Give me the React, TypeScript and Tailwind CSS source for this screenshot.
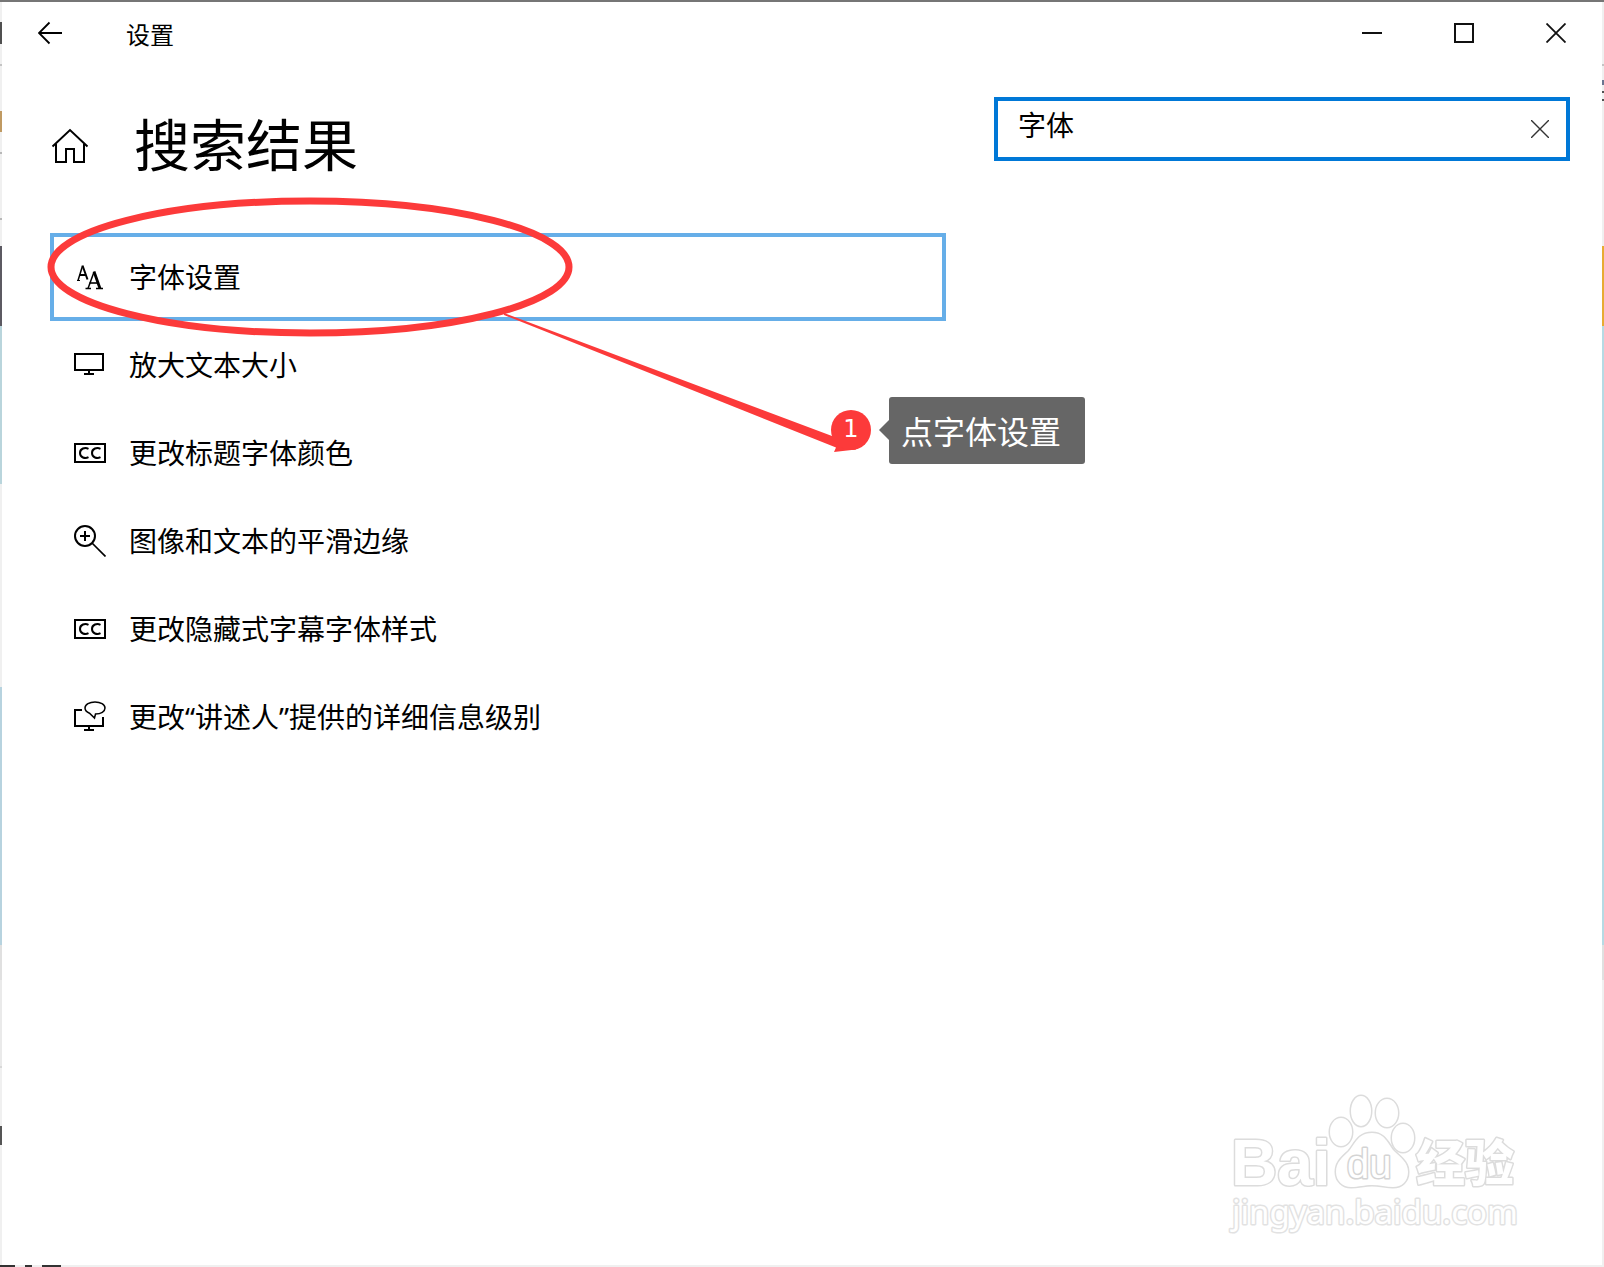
import { useState, type ReactNode } from 'react';

const FONT = "font-['Noto_Sans','Noto_Sans_CJK_SC',sans-serif]";

function FontIcon() {
  return (
    <svg className="size-8 shrink-0" viewBox="0 0 32 32" fill="none" stroke="#000" aria-hidden="true">
      <path d="M4 19.500 8.500 5" strokeWidth="1.500" />
      <path d="M8.500 4.500 13.500 18.500M5.500 14H12" strokeWidth="2" />
      <path d="M3 19.500h3" strokeWidth="1" />
      <path d="M14 27.500 20 11" strokeWidth="1.500" />
      <path d="M20 10.500 26 27.500" strokeWidth="2.800" />
      <path d="M15.500 22H24" strokeWidth="1.600" />
      <path d="M11.500 27.500h5.500M22 27.500h7" strokeWidth="1.400" />
    </svg>
  );
}

function MonitorIcon() {
  return (
    <svg className="size-8 shrink-0" viewBox="0 0 32 32" fill="none" stroke="#000" strokeWidth="2" aria-hidden="true">
      <path d="M1 5H29V21H1ZM15 21V25M10 25H20" />
    </svg>
  );
}

function CaptionIcon() {
  return (
    <svg className="size-8 shrink-0" viewBox="0 0 32 32" fill="none" stroke="#000" strokeWidth="2" aria-hidden="true">
      <path d="M1 7H31V25H1Z" />
      <path d="M14.500 11.800C11 10 6 11.500 6 16s5 6 8.500 4.200M26.500 11.800C23 10 18 11.500 18 16s5 6 8.500 4.200" />
    </svg>
  );
}

function ZoomIcon() {
  return (
    <svg className="size-8 shrink-0" viewBox="0 0 32 32" fill="none" stroke="#000" strokeWidth="2" aria-hidden="true">
      <circle cx="11" cy="11" r="10" />
      <path d="M6 11H16M11 6V16" />
      <path d="M18 18 31.500 31.500" strokeWidth="1.700" />
    </svg>
  );
}

function NarratorIcon() {
  return (
    <svg className="size-8 shrink-0" viewBox="0 0 32 32" fill="none" stroke="#000" strokeWidth="2" aria-hidden="true">
      <path d="M8 9H1V25H29V16M15 25V29M10 29H20" />
      <path
        d="M15.500 12.200C12.500 11 11 9 11 7c0-3.500 4.500-6 10-6s10 2.500 10 6-4 6-9.500 6l-1 4Z"
        strokeWidth="1.500"
      />
    </svg>
  );
}

const results: { label: string; icon: ReactNode }[] = [
  { label: '字体设置', icon: <FontIcon /> },
  { label: '放大文本大小', icon: <MonitorIcon /> },
  { label: '更改标题字体颜色', icon: <CaptionIcon /> },
  { label: '图像和文本的平滑边缘', icon: <ZoomIcon /> },
  { label: '更改隐藏式字幕字体样式', icon: <CaptionIcon /> },
  { label: '更改“讲述人”提供的详细信息级别', icon: <NarratorIcon /> },
];

// slivers of the desktop that show beside the window
const leftEdge = [
  'h-[20px] bg-[#f0f0f0]',
  'h-[22px] bg-[#505050]',
  'h-[20px] bg-[#f0f0f0]',
  'h-[2px] bg-[#c4c4c4]',
  'h-[45px] bg-[#f0f0f0]',
  'h-[21px] bg-[#c09a62]',
  'h-[20px] bg-[#f0f0f0]',
  'h-[2px] bg-[#b8b8b8]',
  'h-[64px] bg-[#f0f0f0]',
  'h-[2px] bg-[#b8b8b8]',
  'h-[26px] bg-[#f0f0f0]',
  'h-[80px] bg-[#5c5a62]',
  'h-[158px] bg-[#b9d5dc]',
  'h-[203px] bg-[#f0f0f0]',
  'h-[258px] bg-[#b7d3df]',
  'h-[35px] bg-[#e0e0e0]',
  'h-[86px] bg-[#eaeaea]',
  'h-[2px] bg-[#d8d8d8]',
  'h-[58px] bg-[#f0f0f0]',
  'h-[19px] bg-[#555555]',
  'flex-1 bg-[#f0f0f0]',
];

const rightEdge = [
  'h-[62px] bg-[#f0f0f0]',
  'h-[2px] bg-[#c4c4c4]',
  'h-[14px] bg-[#f0f0f0]',
  'h-[5px] bg-[#6a7590]',
  'h-[6px] bg-[#f0f0f0]',
  'h-[2px] bg-[#505050]',
  'h-[6px] bg-[#f0f0f0]',
  'h-[2px] bg-[#505050]',
  'h-[145px] bg-[#f0f0f0]',
  'h-[80px] bg-[#e8ab32]',
  'h-[619px] bg-[#b6dae4]',
  'h-[35px] bg-[#e0e0e0]',
  'flex-1 bg-[#f0f0f0]',
];

function Edge({ parts }: { parts: string[] }) {
  return (
    <div className="flex w-[2px] shrink-0 flex-col" aria-hidden="true">
      {parts.map((part, i) => (
        <div key={i} className={part} />
      ))}
    </div>
  );
}

function TitleBar() {
  return (
    <header className="flex h-[62px] items-center">
      <button type="button" aria-label="返回" className="flex h-full w-24 items-center justify-center">
        <svg className="size-6" viewBox="0 0 24 24" fill="none" stroke="#000" strokeWidth="1.800">
          <path d="M1 12H24M11.500 1.500 1 12 11.500 22.500" />
        </svg>
      </button>
      <span className="ml-7 pt-1 text-[24px] leading-8">设置</span>
      <div className="ml-auto flex h-full">
        <button type="button" aria-label="最小化" className="flex w-[92px] items-center justify-center">
          <svg className="size-5" viewBox="0 0 20 20" stroke="#111" strokeWidth="2">
            <path d="M0 10H20" />
          </svg>
        </button>
        <button type="button" aria-label="最大化" className="flex w-[92px] items-center justify-center">
          <svg className="size-5" viewBox="0 0 20 20" fill="none" stroke="#111" strokeWidth="2">
            <path d="M1 1H19V19H1Z" />
          </svg>
        </button>
        <button type="button" aria-label="关闭" className="flex w-[92px] items-center justify-center">
          <svg className="size-5" viewBox="0 0 20 20" stroke="#111" strokeWidth="1.800">
            <path d="M.5.500 19.500 19.500M19.500.500.5 19.500" />
          </svg>
        </button>
      </div>
    </header>
  );
}

// hand-drawn callout over the first result
function Callout() {
  return (
    <div className="pointer-events-none absolute top-0 left-0">
      <svg className="h-[480px] w-[900px]" viewBox="2 2 900 480" fill="none">
        <ellipse cx="310" cy="267" rx="259" ry="66" stroke="#fc3a3a" strokeWidth="7" />
        <path d="M504 313 832 436 851 430 856 449.500 834 452 836 447.500 504 315Z" fill="#fc3a3a" />
        <circle cx="851" cy="430" r="20" fill="#fc3a3a" />
        <path d="M879 430 890 419V441Z" fill="#666" />
        <text x="851" y="437" textAnchor="middle" fill="#fff" className="font-['DejaVu_Sans',sans-serif] text-[24px]">
          1
        </text>
      </svg>
      <div className="absolute top-[395px] left-[887px] rounded-[3px] bg-[#666] pt-[11px] pr-6 pb-2 pl-3 text-[32px] leading-[48px] whitespace-nowrap text-white">
        点字体设置
      </div>
    </div>
  );
}

function Watermark() {
  return (
    <svg
      className="pointer-events-none absolute right-[62px] bottom-[25px] h-[150px] w-[320px]"
      viewBox="1220 1090 320 150"
      fill="#fff"
      stroke="#dcdcdc"
      strokeWidth="3"
      strokeLinejoin="round"
      aria-hidden="true"
    >
      <g paintOrder="stroke">
        <text x="1231" y="1185" className="font-['Liberation_Sans',sans-serif] text-[64px] font-bold">
          Bai
        </text>
        <ellipse cx="1341" cy="1132" rx="11" ry="14" />
        <ellipse cx="1361" cy="1111" rx="10" ry="15" />
        <ellipse cx="1387" cy="1113" rx="11" ry="14" />
        <ellipse cx="1403" cy="1138" rx="11" ry="14" />
        <path d="M1372 1133c-14 0-17 11-23 18-7 7-13 11-13 21 0 9 7 15 15 15 8 0 13-2 21-2s14 2 21 2c9 0 15-6 15-15 0-10-7-14-14-21-6-7-9-18-22-18Z" />
        <text
          x="1347"
          y="1178"
          stroke="#d4d4d4"
          className="font-['Liberation_Sans',sans-serif] text-[40px]"
        >
          du
        </text>
        <text x="1416" y="1181" className="font-['Noto_Sans_CJK_SC',sans-serif] text-[49px] font-black">
          经验
        </text>
        <text x="1232" y="1224" stroke="#e2e2e2" className="font-['Noto_Sans',sans-serif] text-[33px]">
          jingyan.baidu.com
        </text>
      </g>
    </svg>
  );
}

export default function App() {
  const [query, setQuery] = useState('字体');

  return (
    <div lang="zh-CN" className={`flex min-h-screen flex-col bg-white text-black ${FONT}`}>
      <div className="h-[2px] bg-[#767676]" />
      <div className="flex flex-1">
        <Edge parts={leftEdge} />

        <main className="relative min-w-0 flex-1">
          <TitleBar />

          <div className="mt-[33px] mr-8 ml-12 flex h-24 items-start">
            <a href="#home" aria-label="主页" className="mt-[30px]">
              <svg className="h-9 w-10" viewBox="50 127 40 36" fill="none" stroke="#000" strokeWidth="2">
                <path d="M52.500 146.500 70 130 87.500 146.500M56 144V162H66V149H74V162H84V144" />
              </svg>
            </a>
            <h1 className="ml-11 pt-[7px] text-[56px] leading-[80px] whitespace-nowrap">搜索结果</h1>
            <div className="ml-auto flex h-16 w-[576px] border-4 border-[#0078d7]">
              <input
                type="text"
                aria-label="查找设置"
                value={query}
                onChange={(e) => setQuery(e.target.value)}
                className="min-w-0 flex-1 pb-2 pl-5 text-[28px] leading-10 outline-none"
              />
              <button
                type="button"
                aria-label="清除"
                onClick={() => setQuery('')}
                className="flex w-[52px] items-center justify-center"
              >
                <svg className="size-[18px]" viewBox="0 0 18 18" stroke="#333" strokeWidth="1.400">
                  <path d="M0 0 18 18M18 0 0 18" />
                </svg>
              </button>
            </div>
          </div>

          <ul className="mt-10 ml-12 w-[56%]">
            {results.map((item, i) => (
              <li key={item.label}>
                <button
                  type="button"
                  className={`flex h-[88px] w-full items-center border-4 pl-5 text-left ${
                    i === 0 ? 'border-[#66aee8]' : 'border-transparent'
                  }`}
                >
                  {item.icon}
                  <span className="ml-[23px] text-[28px] leading-10">{item.label}</span>
                </button>
              </li>
            ))}
          </ul>

          <Callout />
          <Watermark />
        </main>

        <Edge parts={rightEdge} />
      </div>
      <div className="flex h-[2px] bg-[#f0f0f0]">
        <div className="w-[15px] bg-[#333]" />
        <div className="ml-[10px] w-[7px] bg-[#333]" />
        <div className="ml-[10px] w-[19px] bg-[#333]" />
      </div>
    </div>
  );
}
